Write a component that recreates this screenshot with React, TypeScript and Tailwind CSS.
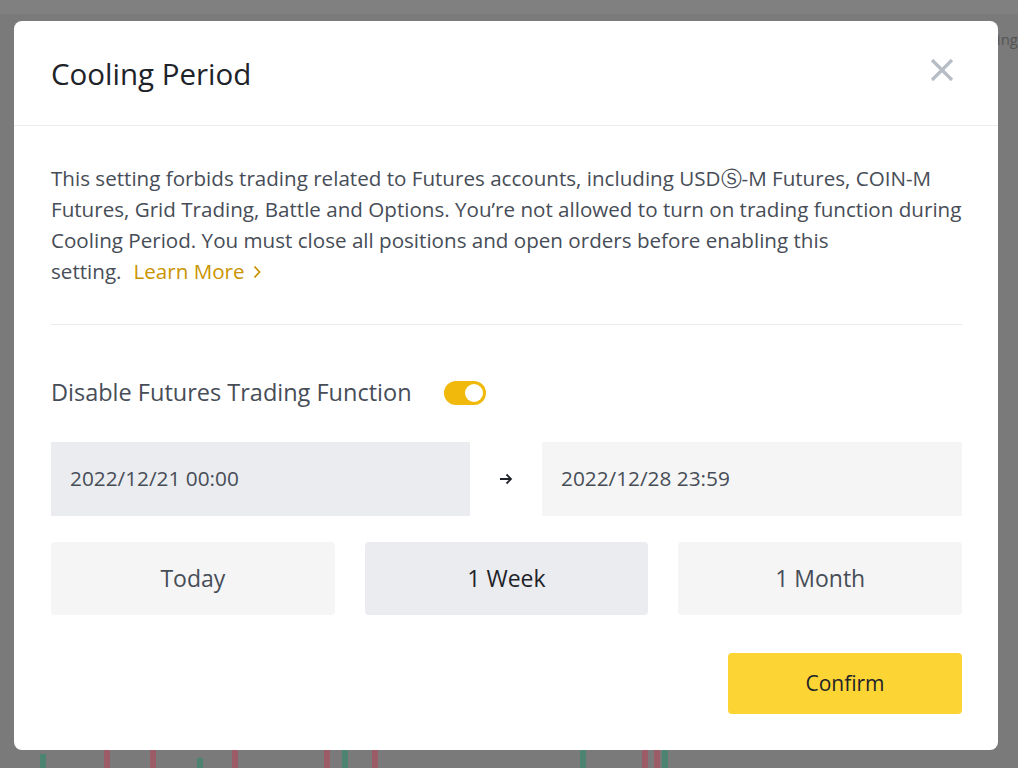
import { useState } from "react";

const candles = [
    { x: 40, h: 14, c: "bg-[#2f8a6a]" },
    { x: 104, h: 30, c: "bg-[#b0475a]" },
    { x: 150, h: 22, c: "bg-[#b0475a]" },
    { x: 197, h: 10, c: "bg-[#2f8a6a]" },
    { x: 232, h: 36, c: "bg-[#b0475a]" },
    { x: 324, h: 30, c: "bg-[#b0475a]" },
    { x: 342, h: 36, c: "bg-[#2f8a6a]" },
    { x: 372, h: 24, c: "bg-[#b0475a]" },
    { x: 580, h: 32, c: "bg-[#2f8a6a]" },
    { x: 642, h: 38, c: "bg-[#b0475a]" },
    { x: 654, h: 30, c: "bg-[#b0475a]" },
    { x: 662, h: 36, c: "bg-[#2f8a6a]" },
];

export default function App() {
    const [enabled, setEnabled] = useState(true);
    const [range, setRange] = useState("1 Week");

    return (
        <div className="relative w-[1018px] h-[768px] overflow-hidden bg-[#7a7a7a] font-['Open_Sans',sans-serif]">
            {/* chart behind overlay */}
            <div className="absolute top-0 left-0 w-full h-[14px] bg-[#808080]" />
            <div className="absolute right-0 top-[28px] text-[15px] text-[#555]">ing</div>
            {candles.map((k, i) => (
                <div
                    key={i}
                    className={`absolute bottom-0 w-[6px] opacity-60 ${k.c}`}
                    style={{ left: k.x, height: k.h }}
                />
            ))}

            <div className="absolute left-[14px] top-[21px] w-[984px] h-[729px] bg-white rounded-[8px] flex flex-col">
                {/* Header */}
                <div className="h-[105px] shrink-0 flex items-center justify-between pl-[37px] pr-[44px] border-b border-[#eaecef]">
                    <h2 className="text-[29.5px] text-[#1e2329] leading-none pt-[2px]">Cooling Period</h2>
                    <button className="w-[24px] h-[24px] flex items-center justify-center mb-[6px]">
                        <svg width="24" height="24" viewBox="0 0 24 24" fill="none">
                            <path d="M2 2L22 22M22 2L2 22" stroke="#b7bdc6" strokeWidth="3.2" />
                        </svg>
                    </button>
                </div>

                {/* Body */}
                <div className="flex flex-col pl-[37px] pr-[36px] pt-[37px]">
                    <p className="text-[20.6px] leading-[31px] text-[#474d57]">
                        This setting forbids trading related to Futures accounts, including USDⓈ-M Futures, COIN-M
                        Futures, Grid Trading, Battle and Options. You’re not allowed to turn on trading function during
                        Cooling Period. You must close all positions and open orders before enabling this{" "}
                        <span className="whitespace-nowrap">
                            setting.
                            <a className="ml-[12px] text-[#c99400] cursor-pointer">
                                Learn More
                                <svg className="inline-block ml-[8px] mb-[3px]" width="8" height="14" viewBox="0 0 8 14" fill="none">
                                    <path d="M1.5 1.5L6.5 7L1.5 12.5" stroke="#c99400" strokeWidth="1.8" />
                                </svg>
                            </a>
                        </span>
                    </p>

                    <div className="mt-[37px] h-px bg-[#eaecef]" />

                    <div className="mt-[56px] flex items-center gap-[32px] h-[24px]">
                        <span className="text-[23.5px] text-[#474d57]">Disable Futures Trading Function</span>
                        <button
                            onClick={() => setEnabled(!enabled)}
                            className={`w-[42px] h-[24px] rounded-full flex items-center px-[3px] ${enabled ? "bg-[#f0b90b] justify-end" : "bg-[#eaecef] justify-start"}`}
                        >
                            <span className="w-[18px] h-[18px] rounded-full bg-white" />
                        </button>
                    </div>

                    <div className="mt-[37px] flex items-center">
                        <div className="w-[419px] h-[74px] bg-[#eaecef] flex items-center px-[19px] text-[20.8px] text-[#474d57]">
                            2022/12/21 00:00
                        </div>
                        <div className="w-[72px] flex items-center justify-center">
                            <svg width="14" height="12" viewBox="0 0 14 12" fill="none">
                                <path d="M1 6H12M7.5 1.5L12 6L7.5 10.5" stroke="#1e2329" strokeWidth="1.8" />
                            </svg>
                        </div>
                        <div className="flex-1 h-[74px] bg-[#f5f5f5] flex items-center px-[19px] text-[20.8px] text-[#474d57]">
                            2022/12/28 23:59
                        </div>
                    </div>

                    <div className="mt-[26px] grid grid-cols-3 gap-[30px]">
                        {["Today", "1 Week", "1 Month"].map((r) => (
                            <button
                                key={r}
                                onClick={() => setRange(r)}
                                className={`h-[73px] rounded-[4px] text-[23px] ${range === r ? "bg-[#eaecef] text-[#1e2329] font-medium" : "bg-[#f5f5f5] text-[#474d57]"}`}
                            >
                                {r}
                            </button>
                        ))}
                    </div>

                    <div className="mt-[38px] flex justify-end">
                        <button className="w-[234px] h-[61px] rounded-[4px] bg-[#fcd535] text-[21px] text-[#1e2329] font-medium">
                            Confirm
                        </button>
                    </div>
                </div>
            </div>
        </div>
    );
}
